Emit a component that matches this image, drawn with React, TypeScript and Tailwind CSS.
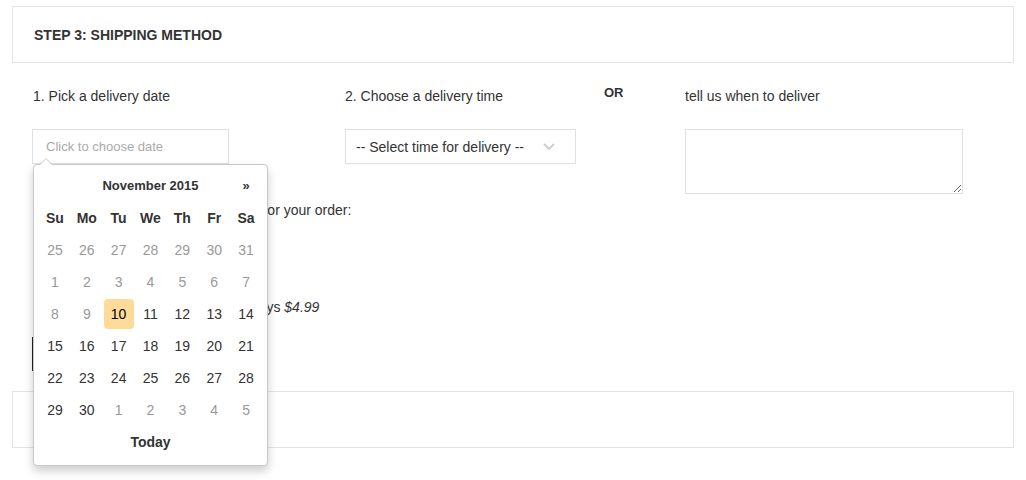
import React from "react";

const weekDays = ["Su", "Mo", "Tu", "We", "Th", "Fr", "Sa"];

type Day = { n: number; muted?: boolean; today?: boolean };

function buildWeeks(): Day[][] {
  const days: Day[] = [];
  for (let n = 25; n <= 31; n++) days.push({ n, muted: true });
  for (let n = 1; n <= 30; n++) days.push({ n, muted: n < 10, today: n === 10 });
  for (let n = 1; n <= 5; n++) days.push({ n, muted: true });
  const weeks: Day[][] = [];
  for (let i = 0; i < days.length; i += 7) weeks.push(days.slice(i, i + 7));
  return weeks;
}

function Calendar() {
  const weeks = buildWeeks();
  return (
    <div className="absolute left-px top-[35px] z-10 w-[235px] rounded-[4px] border border-[#c8c8c8] bg-white px-[5px] pt-[5px] pb-[7px] shadow-[0_5px_10px_rgba(0,0,0,0.2)]">
      <div className="absolute -top-[7px] left-[5px] h-0 w-0 border-x-[7px] border-b-[7px] border-x-transparent border-b-[#c8c8c8]" />
      <div className="absolute -top-[6px] left-[6px] h-0 w-0 border-x-[6px] border-b-[6px] border-x-transparent border-b-white" />
      <div className="grid grid-cols-7 text-center text-[14px]">
        <div className="flex h-8 items-center justify-center" />
        <div className="col-span-5 flex h-8 items-center justify-center text-[13px] font-bold">November 2015</div>
        <div className="flex h-8 items-center justify-center text-[13px] font-bold">»</div>
        {weekDays.map((d) => (
          <div key={d} className="flex h-8 items-center justify-center font-bold">
            {d}
          </div>
        ))}
        {weeks.map((w, i) =>
          w.map((d, j) => (
            <div key={i + "-" + j} className="flex h-8 items-center justify-center">
              <span
                className={
                  d.today
                    ? "flex h-[30px] w-[30px] items-center justify-center rounded-[4px] bg-[#ffdb99] text-black"
                    : d.muted
                    ? "text-[#999]"
                    : "text-[#333]"
                }
              >
                {d.n}
              </span>
            </div>
          ))
        )}
        <div className="col-span-7 flex h-8 items-center justify-center font-bold">Today</div>
      </div>
    </div>
  );
}

export default function App() {
  return (
    <div className="min-h-[480px] bg-white px-3 pt-[6px] font-['Liberation_Sans',Arial,sans-serif] text-[14px] text-[#333]">
      <div className="flex h-[57px] items-center border border-[#e3e3e3] pl-[21px] pt-px">
        <h2 className="text-[14px] font-bold">STEP 3: SHIPPING METHOD</h2>
      </div>

      <div className="px-5 pt-[23px]">
        <div className="flex">
          <div className="w-[313px]">
            <div className="pl-px leading-5">1. Pick a delivery date</div>
            <div className="relative mt-[23px] w-[197px]">
              <input
                readOnly
                placeholder="Click to choose date"
                className="h-[35px] w-full border border-[#e0e0e0] px-[13px] text-[13px] outline-none placeholder:text-[#aaa]"
              />
              <Calendar />
            </div>
          </div>

          <div className="w-[258px]">
            <div className="leading-5">2. Choose a delivery time</div>
            <div className="mt-[23px] flex h-[35px] w-[231px] items-center justify-between border border-[#e0e0e0] pl-[10px] pr-[20px] pt-px">
              <span>-- Select time for delivery --</span>
              <svg width="12" height="8" viewBox="0 0 12 8" fill="none">
                <polyline points="1,1 6,6 11,1" stroke="#cfcfcf" strokeWidth="2" />
              </svg>
            </div>
          </div>

          <div className="w-[82px]">
            <div className="-mt-[3px] pl-px text-[13px] font-bold leading-5">OR</div>
          </div>

          <div className="flex-1">
            <div className="leading-5">tell us when to deliver</div>
            <textarea className="mt-[23px] block h-[65px] w-[278px] border border-[#e0e0e0] outline-none" />
          </div>
        </div>

        <div className="mt-[6px] pl-[26px] leading-5">Please select a shipping method for your order:</div>
        <div className="mt-[13px] flex flex-col gap-[12px] pl-[8px]">
          <label className="flex items-center gap-2 leading-5">
            <input type="radio" name="ship" />
            <span>Standard 5-7 days</span>
          </label>
          <label className="flex items-center gap-2 leading-5">
            <input type="radio" name="ship" />
            <span>Priority 3 days</span>
          </label>
          <label className="flex items-center gap-2 leading-5">
            <input type="radio" name="ship" />
            <span>
              Express delivery 1-2 business days <em>$4.99</em>
            </span>
          </label>
        </div>
        <button className="mt-[20px] h-[34px] w-[140px] bg-[#222] text-[13px] font-bold text-white">CONTINUE</button>
      </div>

      <div className="mt-[20px] flex h-[57px] items-center border border-[#e3e3e3] pl-[21px]">
        <h2 className="text-[14px] font-bold">STEP 4: PAYMENT</h2>
      </div>
    </div>
  );
}
